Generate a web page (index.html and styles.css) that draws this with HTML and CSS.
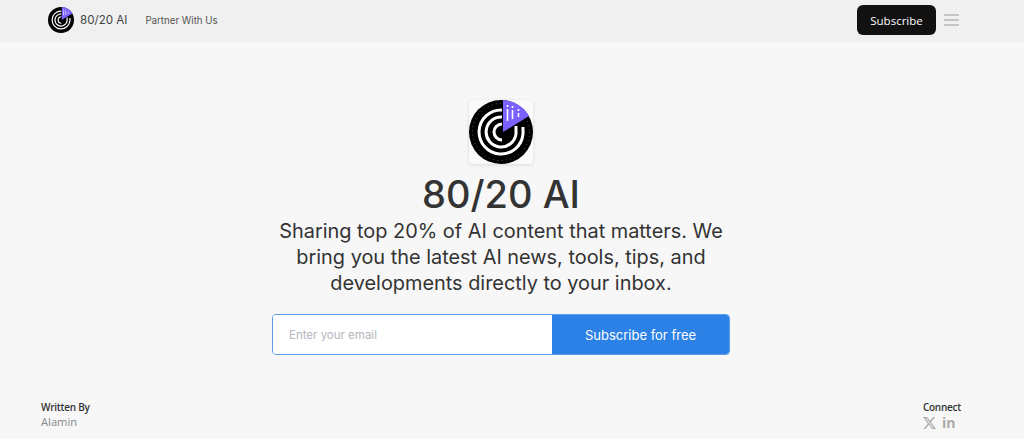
FILE: index.html
```html
<!DOCTYPE html>
<html lang="en">
<head>
  <meta charset="UTF-8" />
  <meta name="viewport" content="width=device-width, initial-scale=1.0" />
  <title>80/20 AI</title>
  <link rel="stylesheet" href="styles.css">
</head>
<body>
  <svg class="defs" width="0" height="0">
    <symbol id="logo" viewBox="0 0 64 64">
      <circle cx="32" cy="32" r="32" fill="#000"/>
      <circle cx="32" cy="32" r="28.5" fill="none" stroke="#888" stroke-width="0.8" stroke-dasharray="0.8 3.5"/>
      <path d="M33 10 A22 22 0 1 0 54 34 V27" fill="none" stroke="#fff" stroke-width="3"/>
      <path d="M33 17 A15 15 0 1 0 47 34 V26" fill="none" stroke="#fff" stroke-width="3"/>
      <path d="M33 24 A8 8 0 0 0 33 40" fill="none" stroke="#fff" stroke-width="3"/>
      <path d="M34 0 A32 32 0 0 1 60 16 L34 32 Z" fill="#7b61ff"/>
      <path d="M38.500 9 V21 M43.500 10 V19 M49.500 13 V17" stroke="#fff" stroke-width="1.600" fill="none"/>
      <path d="M38.500 5 v2 M43.500 6 v2 M49.500 9 v2" stroke="#fff" stroke-width="1.600" fill="none"/>
    </symbol>
  </svg>

  <header class="topbar">
    <div class="topbar-left">
      <a class="brand" href="#">
        <svg class="brand-logo"><use href="#logo"/></svg>
        <span>80/20 AI</span>
      </a>
      <a class="nav-link" href="#">Partner With Us</a>
    </div>
    <div class="topbar-right">
      <button class="btn-dark">Subscribe</button>
      <svg class="menu-icon" width="15" height="12" viewBox="0 0 15 12">
        <path d="M0 1h15M0 6h15M0 11h15" stroke="#999" stroke-width="1" fill="none"/>
      </svg>
    </div>
  </header>

  <main class="hero">
    <div class="hero-logo"><svg><use href="#logo"/></svg></div>
    <h1>80/20 AI</h1>
    <p class="tagline">Sharing top 20% of AI content that matters. We bring you the latest AI news, tools, tips, and developments directly to your inbox.</p>
    <form class="signup">
      <input type="email" placeholder="Enter your email">
      <button type="button">Subscribe for free</button>
    </form>
  </main>

  <footer class="foot">
    <div>
      <div class="foot-title">Written By</div>
      <div class="foot-name">Alamin</div>
    </div>
    <div>
      <div class="foot-title">Connect</div>
      <div class="social">
        <svg width="13" height="12" viewBox="0 0 24 22"><path d="M18.9 0h3.7l-8 9.2L24 22h-7.4l-5.8-7.6L4.200 22H.5l8.600-9.800L0 0h7.600l5.200 6.900zM17.600 19.800h2L6.500 2.100H4.300z" fill="#aaa"/></svg>
        <span class="in">in</span>
      </div>
    </div>
  </footer>
</body>
</html>
```

FILE: styles.css
```css
html {
  height: 100%;
}
body {
  margin: 0;
  background-color: #f7f7f7;
  color: #2c2c2c;
  font-family: "Inter", "Noto Sans", sans-serif;
  overflow: hidden;
}
.defs {
  display: block;
  height: 0;
}
a {
  color: inherit;
  text-decoration: none;
}
.topbar {
  height: 42px;
  background-color: #f0f0f0;
  display: flex;
  align-items: center;
  justify-content: space-between;
  padding: 0 65px 2px 48px;
  box-sizing: border-box;
}
.topbar-left, .topbar-right, .brand {
  display: flex;
  align-items: center;
}
.brand {
  gap: 6px;
  font-size: 11.6px;
  color: #444;
}
.brand-logo {
  width: 26px;
  height: 26px;
}
.nav-link {
  margin-left: 18px;
  font-size: 9.7px;
  color: #555;
}
.btn-dark {
  background-color: #111;
  color: #fff;
  border: 0;
  border-radius: 6px;
  width: 79px;
  height: 30px;
  font-family: "Open Sans", sans-serif;
  font-size: 11.5px;
}
.menu-icon {
  margin-left: 8px;
}
.hero {
  display: flex;
  flex-direction: column;
  align-items: center;
  padding: 58px 22px 0 0;
}
.hero-logo {
  width: 64px;
  height: 64px;
  box-shadow: 0 1px 4px rgba(0, 0, 0, 0.12);
  border-radius: 4px;
  background-color: #fafafa;
}
.hero-logo svg {
  display: block;
  width: 64px;
  height: 64px;
}
h1 {
  margin: 6px 0 0;
  font-size: 38px;
  line-height: 48px;
  font-weight: 500;
  color: #333;
}
.tagline {
  margin: 0;
  width: 470px;
  text-align: center;
  font-size: 19.9px;
  line-height: 26px;
  color: #333;
}
.signup {
  display: flex;
  width: 458px;
  height: 41px;
  margin-top: 18px;
  border-radius: 4px;
  border: 1.5px solid #5c9cee;
  box-sizing: border-box;
  overflow: hidden;
}
.signup input {
  flex: 1;
  min-width: 0;
  border: 0;
  padding: 0 16px;
  font-family: "Inter", sans-serif;
  font-size: 11.5px;
  background-color: #fff;
}
.signup input::placeholder {
  color: #b5b5bd;
}
.signup button {
  width: 177px;
  border: 0;
  background-color: #2b81e6;
  color: #fff;
  font-family: "Inter", sans-serif;
  font-size: 13px;
}
.foot {
  display: flex;
  justify-content: space-between;
  padding: 45px 63px 0 41px;
}
.foot-title {
  font-family: "Open Sans", sans-serif;
  font-size: 10px;
  letter-spacing: -0.25px;
  font-weight: 600;
  color: #333;
  line-height: 14px;
}
.foot-name {
  font-family: "Open Sans", sans-serif;
  font-size: 11.2px;
  color: #888;
  line-height: 16px;
}
.social {
  display: flex;
  align-items: center;
  gap: 6px;
  margin-top: 2px;
}
.in {
  font-family: "Open Sans", sans-serif;
  font-weight: 700;
  font-size: 14px;
  line-height: 14px;
  color: #aaa;
}
```
